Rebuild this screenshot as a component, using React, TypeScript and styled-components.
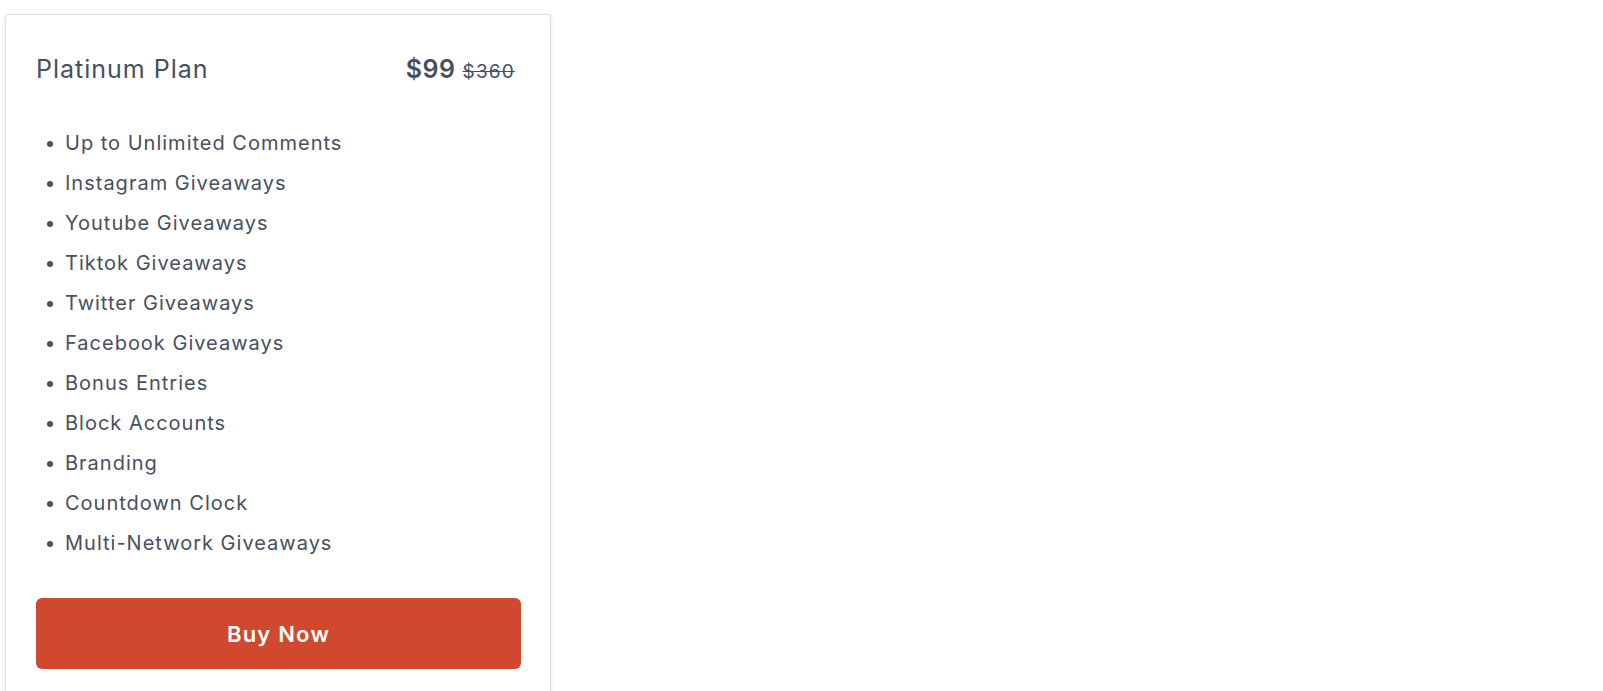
import React from "react";
import styled, { createGlobalStyle } from "styled-components";

const GlobalStyle = createGlobalStyle`
  html, body {
    margin: 0;
    padding: 0;
    background: #ffffff;
  }
  body {
    font-family: Inter, "Open Sans", Arial, sans-serif;
    color: #465060;
  }
`;

const Page = styled.div`
  padding: 14px 0 0 5px;
`;

const Card = styled.div`
  width: 546px;
  box-sizing: border-box;
  border: 1px solid #e0e0e0;
  border-radius: 3px;
  box-shadow: 0 1px 4px rgba(0, 0, 0, 0.12);
  padding: 39px 29px 40px 30px;
  background: #fff;
`;

const Header = styled.div`
  display: flex;
  align-items: baseline;
  justify-content: space-between;
  padding-right: 6px;
`;

const PlanName = styled.h2`
  margin: 0;
  font-size: 25px;
  line-height: 31px;
  font-weight: 400;
  letter-spacing: 1px;
  color: #465060;
`;

const Prices = styled.div`
  display: flex;
  align-items: baseline;
  gap: 7px;
`;

const Price = styled.span<{ $old?: boolean }>`
  font-size: ${(p) => (p.$old ? "19px" : "25px")};
  font-weight: ${(p) => (p.$old ? 400 : 600)};
  letter-spacing: ${(p) => (p.$old ? "1.2px" : "0.5px")};
  text-decoration: ${(p) => (p.$old ? "line-through" : "none")};
  color: #465060;
`;

const Features = styled.ul`
  list-style: none;
  margin: 38px 0 0;
  padding: 0;
`;

const Feature = styled.li`
  display: flex;
  align-items: center;
  padding-left: 11px;
  font-size: 20px;
  line-height: 40px;
  letter-spacing: 1px;

  &::before {
    content: "";
    width: 6px;
    height: 6px;
    border-radius: 50%;
    background: #465060;
    margin-right: 12px;
    margin-top: 2px;
  }
`;

const BuyButton = styled.button`
  display: block;
  width: 100%;
  height: 71px;
  margin-top: 35px;
  border: none;
  border-radius: 6px;
  background: #d0482d;
  color: #fff;
  font-family: Inter, "Open Sans", Arial, sans-serif;
  font-size: 22px;
  font-weight: 600;
  letter-spacing: 1.2px;
  cursor: pointer;
`;

const features = [
  "Up to Unlimited Comments",
  "Instagram Giveaways",
  "Youtube Giveaways",
  "Tiktok Giveaways",
  "Twitter Giveaways",
  "Facebook Giveaways",
  "Bonus Entries",
  "Block Accounts",
  "Branding",
  "Countdown Clock",
  "Multi-Network Giveaways",
];

export default function App() {
  return (
    <>
      <GlobalStyle />
      <Page>
        <Card>
          <Header>
            <PlanName>Platinum Plan</PlanName>
            <Prices>
              <Price>$99</Price>
              <Price $old>$360</Price>
            </Prices>
          </Header>
          <Features>
            {features.map((f) => (
              <Feature key={f}>{f}</Feature>
            ))}
          </Features>
          <BuyButton>Buy Now</BuyButton>
        </Card>
      </Page>
    </>
  );
}
